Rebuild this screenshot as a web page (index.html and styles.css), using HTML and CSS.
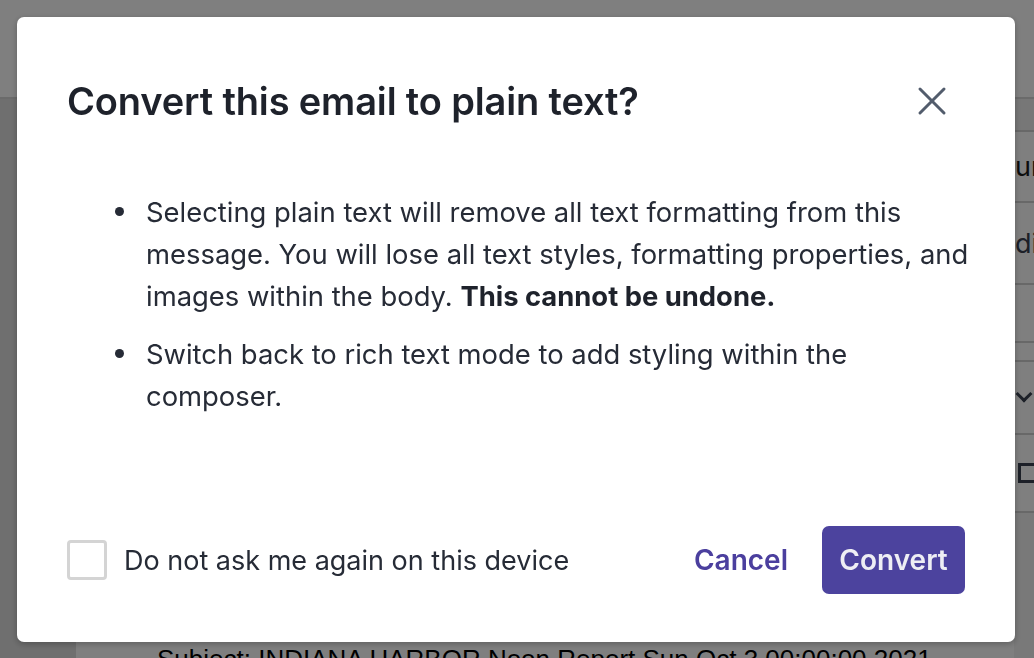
FILE: index.html
```html
<!DOCTYPE html>
<html lang="en">
<head>
    <meta charset="UTF-8">
    <meta name="viewport" content="width=device-width, initial-scale=1.0">
    <title>Convert to plain text</title>
    <link rel="stylesheet" href="styles.css">
</head>
<body>
    <div class="page">
        <div class="topbar"></div>
        <div class="workspace">
            <div class="sidebar"></div>
            <div class="main">
                <div class="mail-lines">
                    <p class="mail-line">Type: Daily report</p>
                    <p class="mail-line">Subject: INDIANA HARBOR Noon Report Sun Oct 3 00:00:00 2021</p>
                </div>
            </div>
            <div class="panel">
                <div class="panel-head"></div>
                <div class="panel-row r1">urs</div>
                <div class="panel-row r2 muted">dit</div>
                <div class="panel-row r3"></div>
                <div class="panel-row r4"></div>
                <div class="panel-row r5"><span class="chevron"></span></div>
                <div class="panel-row r6"><span class="strike"></span></div>
                <div class="panel-rest"></div>
            </div>
        </div>
    </div>

    <div class="overlay">
        <div class="modal" role="dialog">
            <div class="modal-header">
                <h2 class="modal-title">Convert this email to plain text?</h2>
                <button class="close-btn" aria-label="Close">
                    <svg width="32" height="32" viewBox="0 0 32 32" fill="none" stroke="currentColor" stroke-width="3" stroke-linecap="round">
                        <path d="M4 4 L28 28"/>
                        <path d="M28 4 L4 28"/>
                    </svg>
                </button>
            </div>
            <ul class="modal-body">
                <li>Selecting plain text will remove all text formatting from this message. You will lose all text styles, formatting properties, and images within the body. <strong>This cannot be undone.</strong></li>
                <li>Switch back to rich text mode to add styling within the composer.</li>
            </ul>
            <div class="modal-footer">
                <label class="dont-ask">
                    <span class="checkbox"></span>
                    Do not ask me again on this device
                </label>
                <div class="actions">
                    <button class="btn-link">Cancel</button>
                    <button class="btn-primary">Convert</button>
                </div>
            </div>
        </div>
    </div>
</body>
</html>
```

FILE: styles.css
```css
html, body {
    margin: 0;
    height: 100%;
    overflow: hidden;
}

body {
    font-family: Inter, "Noto Sans", "Liberation Sans", sans-serif;
    color: #1f2430;
    background: #fff;
}

/* page behind the dialog */
.page {
    display: flex;
    flex-direction: column;
    height: 100%;
}

.topbar {
    height: 99px;
    flex-shrink: 0;
    border-bottom: 2px solid #d6d6d6;
    box-sizing: border-box;
}

.workspace {
    flex: 1;
    display: flex;
}

.sidebar {
    width: 76px;
    background: #dedede;
}

.main {
    flex: 1;
    display: flex;
    flex-direction: column;
    justify-content: flex-end;
}

.mail-lines {
    padding-left: 81px;
    margin-bottom: -18px;
}

.mail-line {
    margin: 0;
    font-size: 26px;
    line-height: 34px;
    color: #000;
    font-family: "Liberation Sans", Arial, sans-serif;
}

.panel {
    width: 20px;
    display: flex;
    flex-direction: column;
}

.panel-head {
    height: 33px;
    background: #eeeeee;
    border-bottom: 2px solid #d0d0d0;
    box-sizing: border-box;
}

.panel-row {
    border-bottom: 2px solid #d0d0d0;
    box-sizing: border-box;
    display: flex;
    align-items: center;
    font-size: 27px;
    padding-left: 1px;
    white-space: nowrap;
    overflow: hidden;
    color: #1a1a1a;
}

.panel-row.muted {
    color: #3a4150;
}

.r1 { height: 71px; }
.r2 { height: 82px; }
.r3 { height: 58px; }
.r4 { height: 19px; }
.r5 { height: 73px; }
.r6 { height: 78px; }

.panel-rest {
    flex: 1;
    background: #f2f2f2;
}

.chevron {
    width: 9px;
    height: 9px;
    border-right: 3px solid #3a4150;
    border-bottom: 3px solid #3a4150;
    transform: rotate(45deg);
    margin: -8px 0 0 3px;
}

.strike {
    width: 14px;
    height: 14px;
    border: 3px solid #3a4150;
    border-right: 0;
    margin-left: 3px;
}

/* dialog */
.overlay {
    position: fixed;
    inset: 0;
    background: rgba(0, 0, 0, 0.5);
    padding: 17px 19px 0 17px;
}

.modal {
    width: 998px;
    height: 625px;
    background: #fff;
    border-radius: 7px;
    box-sizing: border-box;
    padding: 61px 50px 48px 50px;
    display: flex;
    flex-direction: column;
    box-shadow: 0 2px 6px rgba(0, 0, 0, 0.25);
}

.modal-header {
    display: flex;
    justify-content: space-between;
    align-items: center;
}

.modal-title {
    margin: 0;
    font-size: 38px;
    line-height: 46px;
    font-weight: 600;
    color: #1e222b;
    letter-spacing: -0.15px;
}

.close-btn {
    border: 0;
    background: none;
    padding: 0;
    margin-right: 17px;
    color: #525c6c;
    cursor: pointer;
    display: flex;
}

.modal-body {
    list-style: none;
    margin: 67px -12px 0 0;
    padding-left: 79px;
    font-size: 27.4px;
    line-height: 42px;
    color: #262b36;
    flex: 1;
}

.modal-body li {
    position: relative;
    margin-bottom: 16px;
}

.modal-body li::before {
    content: "";
    position: absolute;
    left: -31px;
    top: 16px;
    width: 9px;
    height: 9px;
    border-radius: 50%;
    background: #262b36;
}

.modal-body strong {
    font-weight: 700;
    color: #1e222b;
}

.modal-footer {
    display: flex;
    justify-content: space-between;
    align-items: center;
}

.dont-ask {
    display: flex;
    align-items: center;
    gap: 17px;
    font-size: 27px;
    color: #262b36;
}

.checkbox {
    width: 34px;
    height: 34px;
    border: 3px solid #d4d4d4;
    border-radius: 4px;
}

.actions {
    display: flex;
    align-items: center;
    gap: 34px;
}

.btn-link {
    border: 0;
    background: none;
    padding: 0;
    font-family: inherit;
    font-size: 28px;
    font-weight: 600;
    color: #4b3f9e;
    cursor: pointer;
}

.btn-primary {
    border: 0;
    background: #4c439e;
    color: #eeeef4;
    font-family: inherit;
    font-size: 28px;
    font-weight: 600;
    width: 143px;
    height: 68px;
    border-radius: 7px;
    cursor: pointer;
}
```
